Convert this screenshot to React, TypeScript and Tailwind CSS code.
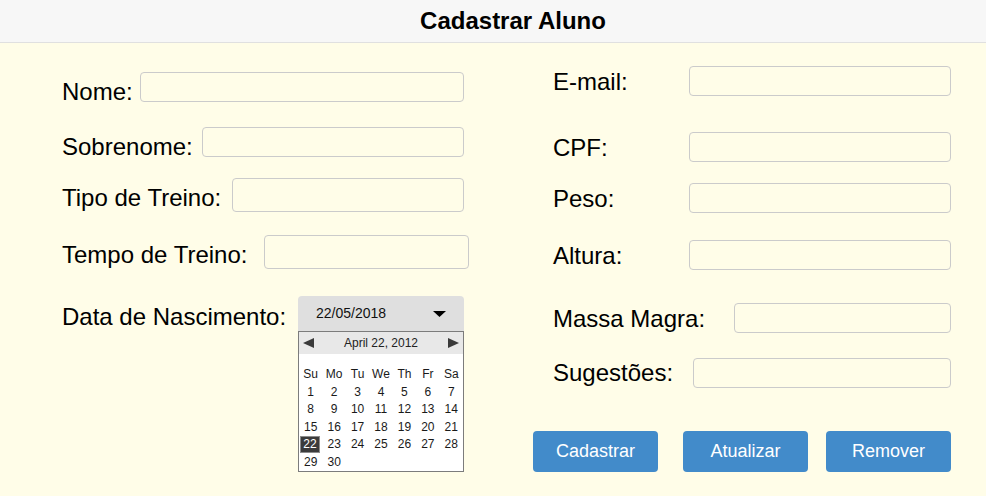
import React from "react";

const days = Array.from({ length: 30 }, (_, i) => i + 1);
const weekDays = ["Su", "Mo", "Tu", "We", "Th", "Fr", "Sa"];

const Field = ({
  label,
  width,
  height = "h-[30px]",
  extra = "",
  labelMb = "mb-[2px]",
}: {
  label: string;
  width: string;
  height?: string;
  extra?: string;
  labelMb?: string;
}) => (
  <div className="flex items-end">
    <label className={`text-[24px] leading-none whitespace-nowrap ${labelMb}`}>
      {label}
    </label>
    <input
      type="text"
      className={`ml-auto ${width} ${height} ${extra} rounded-[4px] border border-[#cbcbcb] bg-transparent outline-none`}
    />
  </div>
);

const DatePicker = () => (
  <div className="ml-auto w-[166px]">
    <div className="flex h-[35px] items-center rounded-t-[4px] bg-[#dfdfdf] pl-[18px] pr-[18px] text-[14px] text-[#111]">
      <span>22/05/2018</span>
      <svg className="ml-auto" width="13" height="6" viewBox="0 0 13 6">
        <path d="M0 0h13L6.5 6z" fill="#000" />
      </svg>
    </div>
    <div className="border border-[#7c7c7c] bg-white">
      <div className="flex h-[22px] items-center justify-between bg-[#e8e8e8] px-[4px] text-[12px] text-[#222]">
        <svg width="11" height="10" viewBox="0 0 11 10">
          <path d="M0 5L11 0v10z" fill="#3a3a3a" />
        </svg>
        <span>April 22, 2012</span>
        <svg width="11" height="10" viewBox="0 0 11 10">
          <path d="M11 5L0 0v10z" fill="#3a3a3a" />
        </svg>
      </div>
      <div className="grid grid-cols-7 pt-[12px] text-[12px] leading-[17.5px] text-[#1a1a1a]">
        {weekDays.map((d) => (
          <div key={d} className="h-[17.5px] text-center">
            {d}
          </div>
        ))}
        {days.map((d) =>
          d === 22 ? (
            <div key={d} className="flex h-[17.5px] items-start pl-[1px]">
              <span className="inline-block h-[17px] w-[20px] border border-[#8c8c8c] bg-[#3b3b3b] text-center leading-[15px] text-white">
                {d}
              </span>
            </div>
          ) : (
            <div key={d} className="h-[17.5px] text-center">
              {d}
            </div>
          )
        )}
      </div>
    </div>
  </div>
);

export default function App() {
  return (
    <div className="h-[496px] w-[986px] overflow-hidden bg-[#fffde8] font-['Liberation_Sans',Arial,sans-serif] text-black">
      <header className="flex h-[43px] items-center justify-center border-b border-[#e0e0e0] bg-[#f7f7f7] pl-[40px]">
        <h1 className="text-[24px] font-bold">Cadastrar Aluno</h1>
      </header>

      <div className="flex">
        <div className="w-[533px] pl-[62px]">
          <div className="flex w-[402px] flex-col">
            <div className="mt-[29px]">
              <Field label="Nome:" width="w-[324px]" labelMb="mb-[-2px]" />
            </div>
            <div className="mt-[25px]">
              <Field label="Sobrenome:" width="w-[262px]" labelMb="mb-[-2px]" />
            </div>
            <div className="mt-[21px]">
              <Field label="Tipo de Treino:" width="w-[232px]" height="h-[34px]" />
            </div>
            <div className="mt-[23px]">
              <Field
                label="Tempo de Treino:"
                width="w-[205px]"
                height="h-[34px]"
                extra="-mr-[5px]"
              />
            </div>
            <div className="mt-[27px] flex items-start">
              <label className="mt-[9px] text-[24px] leading-none whitespace-nowrap">
                Data de Nascimento:
              </label>
              <DatePicker />
            </div>
          </div>
        </div>

        <div className="w-[418px]">
          <div className="flex flex-col">
            <div className="mt-[23px] pl-[20px]">
              <Field label="E-mail:" width="w-[262px]" />
            </div>
            <div className="mt-[36px] pl-[20px]">
              <Field label="CPF:" width="w-[262px]" />
            </div>
            <div className="mt-[21px] pl-[20px]">
              <Field label="Peso:" width="w-[262px]" />
            </div>
            <div className="mt-[27px] pl-[20px]">
              <Field label="Altura:" width="w-[262px]" />
            </div>
            <div className="mt-[33px] pl-[20px]">
              <Field label="Massa Magra:" width="w-[217px]" />
            </div>
            <div className="mt-[25px] pl-[20px]">
              <Field label="Sugestões:" width="w-[258px]" labelMb="mb-[3px]" />
            </div>
            <div className="mt-[43px] flex">
              <button className="h-[41px] w-[125px] rounded-[4px] bg-[#428bca] text-[18px] text-white">
                Cadastrar
              </button>
              <button className="ml-[25px] h-[41px] w-[125px] rounded-[4px] bg-[#428bca] text-[18px] text-white">
                Atualizar
              </button>
              <button className="ml-[18px] h-[41px] w-[125px] rounded-[4px] bg-[#428bca] text-[18px] text-white">
                Remover
              </button>
            </div>
          </div>
        </div>
      </div>
    </div>
  );
}
